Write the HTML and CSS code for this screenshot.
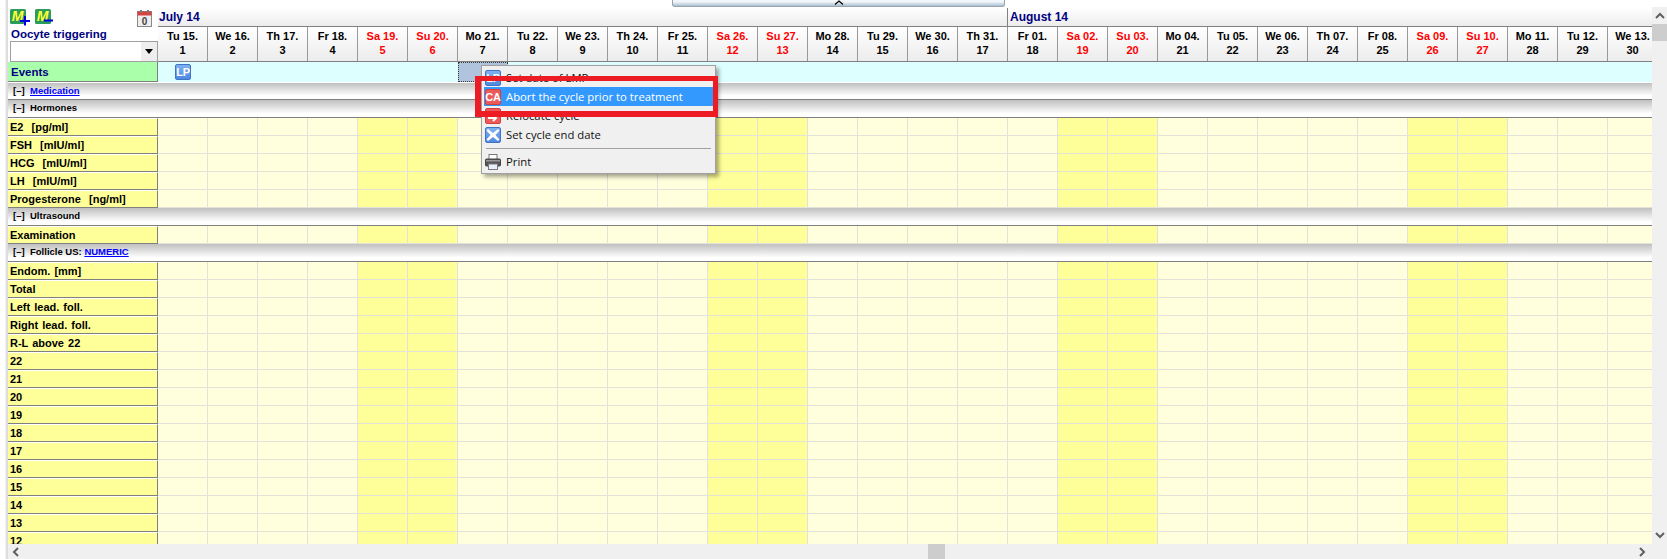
FILE: index.html
```html
<!DOCTYPE html>
<html lang="en">
<head>
<meta charset="utf-8">
<title>Cycle chart</title>
<link rel="stylesheet" href="styles.css">
</head>
<body>
<div class="frame">
  <div class="edge"></div>
  <div class="view">
    <div class="content">
      <div class="head">
        <div class="head-left">
          <div class="tools">
            <svg class="tool" width="21" height="17" viewBox="0 0 21 17"><rect x="0" y="0" width="16" height="15" rx="1.500" fill="#2a9d5c"/><text x="7.500" y="12" class="m">M</text><path d="M15 7v9.500M10 12h10" stroke="#0000e0" stroke-width="2"/></svg>
            <svg class="tool" width="21" height="17" viewBox="0 0 21 17"><rect x="0" y="0" width="16" height="15" rx="1.500" fill="#2a9d5c"/><text x="7.500" y="12" class="m">M</text><path d="M9 11.500h9" stroke="#0000e0" stroke-width="2"/></svg>
            <svg class="cal" width="15" height="17" viewBox="0 0 15 17"><rect x=".5" y="1.500" width="14" height="15" fill="#eee" stroke="#888"/><rect x=".5" y="1.500" width="14" height="4" fill="#d94040"/><rect x="3" y="0" width="2" height="3" fill="#777"/><rect x="10" y="0" width="2" height="3" fill="#777"/><text x="7.500" y="15" class="caltext">0</text></svg>
          </div>
          <div class="picker-label">Oocyte triggering</div>
          <div class="picker"><span class="picker-btn"><i class="tri"></i></span></div>
        </div>
        <div class="head-right">
          <div class="months">
            <div class="month july">July 14</div>
            <div class="month august">August 14</div>
          </div>
          <div class="days">
            <div class="day">Tu 15.<br>1</div>
            <div class="day">We 16.<br>2</div>
            <div class="day">Th 17.<br>3</div>
            <div class="day">Fr 18.<br>4</div>
            <div class="day off">Sa 19.<br>5</div>
            <div class="day off">Su 20.<br>6</div>
            <div class="day">Mo 21.<br>7</div>
            <div class="day">Tu 22.<br>8</div>
            <div class="day">We 23.<br>9</div>
            <div class="day">Th 24.<br>10</div>
            <div class="day">Fr 25.<br>11</div>
            <div class="day off">Sa 26.<br>12</div>
            <div class="day off">Su 27.<br>13</div>
            <div class="day">Mo 28.<br>14</div>
            <div class="day">Tu 29.<br>15</div>
            <div class="day">We 30.<br>16</div>
            <div class="day">Th 31.<br>17</div>
            <div class="day">Fr 01.<br>18</div>
            <div class="day off">Sa 02.<br>19</div>
            <div class="day off">Su 03.<br>20</div>
            <div class="day">Mo 04.<br>21</div>
            <div class="day">Tu 05.<br>22</div>
            <div class="day">We 06.<br>23</div>
            <div class="day">Th 07.<br>24</div>
            <div class="day">Fr 08.<br>25</div>
            <div class="day off">Sa 09.<br>26</div>
            <div class="day off">Su 10.<br>27</div>
            <div class="day">Mo 11.<br>28</div>
            <div class="day">Tu 12.<br>29</div>
            <div class="day">We 13.<br>30</div>
          </div>
        </div>
      </div>

      <div class="events">
        <div class="events-label">Events</div>
        <div class="events-cells"><span class="badge blue ev-lp">LP</span><span class="ev-sel"></span></div>
      </div>

      <div class="section first"><b class="toggle">[–]</b><a class="link">Medication</a></div>
      <div class="section"><b class="toggle">[–]</b><span>Hormones</span></div>
      <div class="row"><div class="label">E2&nbsp;&nbsp;[pg/ml]</div><div class="cells"></div></div>
      <div class="row"><div class="label">FSH&nbsp;&nbsp;[mIU/ml]</div><div class="cells"></div></div>
      <div class="row"><div class="label">HCG&nbsp;&nbsp;[mIU/ml]</div><div class="cells"></div></div>
      <div class="row"><div class="label">LH&nbsp;&nbsp;[mIU/ml]</div><div class="cells"></div></div>
      <div class="row"><div class="label">Progesterone&nbsp;&nbsp;[ng/ml]</div><div class="cells"></div></div>
      <div class="section"><b class="toggle">[–]</b><span>Ultrasound</span></div>
      <div class="row"><div class="label">Examination</div><div class="cells"></div></div>
      <div class="section"><b class="toggle">[–]</b><span>Follicle US:&nbsp;</span><a class="link">NUMERIC</a></div>
      <div class="row"><div class="label">Endom. [mm]</div><div class="cells"></div></div>
      <div class="row"><div class="label">Total</div><div class="cells"></div></div>
      <div class="row"><div class="label">Left lead. foll.</div><div class="cells"></div></div>
      <div class="row"><div class="label">Right lead. foll.</div><div class="cells"></div></div>
      <div class="row"><div class="label">R-L above 22</div><div class="cells"></div></div>
      <div class="row"><div class="label">22</div><div class="cells"></div></div>
      <div class="row"><div class="label">21</div><div class="cells"></div></div>
      <div class="row"><div class="label">20</div><div class="cells"></div></div>
      <div class="row"><div class="label">19</div><div class="cells"></div></div>
      <div class="row"><div class="label">18</div><div class="cells"></div></div>
      <div class="row"><div class="label">17</div><div class="cells"></div></div>
      <div class="row"><div class="label">16</div><div class="cells"></div></div>
      <div class="row"><div class="label">15</div><div class="cells"></div></div>
      <div class="row"><div class="label">14</div><div class="cells"></div></div>
      <div class="row"><div class="label">13</div><div class="cells"></div></div>
      <div class="row"><div class="label">12</div><div class="cells"></div></div>
    </div>
    <div class="hscroll">
      <svg class="arrow" width="8" height="10" viewBox="0 0 8 10"><path d="M6 1 2 5l4 4" fill="none" stroke="#606060" stroke-width="2"/></svg>
      <span class="hthumb"></span>
      <svg class="arrow right" width="8" height="10" viewBox="0 0 8 10"><path d="M2 1l4 4-4 4" fill="none" stroke="#606060" stroke-width="2"/></svg>
    </div>
  </div>
  <div class="vscroll">
    <svg class="varrow" width="10" height="8" viewBox="0 0 10 8"><path d="M1 6 5 2l4 4" fill="none" stroke="#606060" stroke-width="2"/></svg>
    <span class="vthumb"></span>
    <svg class="varrow down" width="10" height="8" viewBox="0 0 10 8"><path d="M1 2l4 4 4-4" fill="none" stroke="#606060" stroke-width="2"/></svg>
  </div>
</div>

<div class="grip"><svg width="10" height="5" viewBox="0 0 10 5"><path d="M1 4.500 5 1l4 3.500" fill="none" stroke="#000" stroke-width="1.300"/></svg></div>

<div class="menu">
  <div class="item"><span class="badge blue">LP</span><span>Set date of LMP</span></div>
  <div class="item active"><span class="badge red">CA</span><span>Abort the cycle prior to treatment</span></div>
  <div class="item"><span class="badge red"><svg width="14" height="14" viewBox="0 0 14 14"><path d="M2 9h7M7 6l3 3-3 3" fill="none" stroke="#fff" stroke-width="2"/></svg></span><span>Relocate cycle</span></div>
  <div class="item"><span class="badge blue"><svg width="14" height="14" viewBox="0 0 14 14"><path d="M2 1 7 5 12 1l1.500 1.500L9.500 7l4 4.500L12 13 7 9l-5 4-1.500-1.500 4-4.500-4-4.500z" fill="#fff"/></svg></span><span>Set cycle end date</span></div>
  <div class="sep"></div>
  <div class="item"><svg class="printer" width="16" height="16" viewBox="0 0 16 16"><rect x="4" y="0.500" width="8" height="5" fill="#fff" stroke="#777"/><rect x=".5" y="5" width="15" height="7" rx="1" fill="#555" stroke="#444"/><rect x="1" y="6" width="14" height="1.500" fill="#999"/><rect x="3.500" y="10" width="9" height="5.500" fill="#e8f0f5" stroke="#778"/></svg><span>Print</span></div>
</div>
<div class="callout"></div>
</body>
</html>
```

FILE: styles.css
```css
* { box-sizing: border-box; }
html, body { margin: 0; padding: 0; }
body {
  width: 1667px;
  height: 559px;
  overflow: hidden;
  background: #fff;
  font: bold 11px "Liberation Sans", Arial, sans-serif;
  color: #000;
}
.frame { display: flex; height: 559px; }
.edge {
  flex: none;
  width: 8px;
  background: linear-gradient(to right, #fff 0, #fff 5px, #e4e4e4 6px, #d8d8d8 8px);
}
.view { flex: none; width: 1644px; display: flex; flex-direction: column; }
.content { flex: none; height: 544px; overflow: hidden; }

.head { display: flex; height: 62px; }
.head-left { flex: none; width: 150px; display: flex; flex-direction: column; background: #fff; }
.tools { display: flex; height: 27px; padding: 9px 0 0 2px; gap: 4px; }
.tool { flex: none; }
.m { font: italic bold 14px "Liberation Sans", sans-serif; fill: #ffff33; text-anchor: middle; }
.caltext { font: bold 10px "Liberation Sans", sans-serif; fill: #444; text-anchor: middle; }
.cal { margin: 1px 6px 0 auto; }
.picker-label { height: 14px; line-height: 14px; padding-left: 3px; color: #000080; font-size: 11.5px; }
.picker {
  height: 21px;
  margin-left: 2px;
  border: 1px solid #a0a0a0;
  background: #fff;
  display: flex;
  justify-content: flex-end;
}
.picker-btn { width: 16px; background: #eee; display: flex; align-items: center; justify-content: center; }
.tri { width: 0; height: 0; border: 4.500px solid transparent; border-top: 5px solid #000; border-bottom: 0; }

.head-right { flex: 1; min-width: 0; overflow: hidden; }
.months {
  display: flex;
  height: 27px;
  border-bottom: 1px solid #808080;
  background: linear-gradient(to bottom, #fff 0, #fff 8px, #ececec 26px);
}
.month { flex: none; font-size: 12px; color: #000080; line-height: 18px; }
.july { width: 849px; padding: 8px 0 0 1px; }
.august { width: 651px; margin-top: 8px; border-left: 1px solid #808080; padding-left: 2px; }
.days { display: flex; height: 35px; border-bottom: 1px solid #808080; }
.day {
  flex: none;
  width: 50px;
  text-align: center;
  line-height: 14px;
  padding-top: 2px;
  border-right: 1px solid #999;
  background: linear-gradient(to bottom, #fff, #ececec);
}
.off { color: #f00; }

.events { display: flex; height: 21px; }
.events-label {
  flex: none;
  width: 150px;
  height: 20px;
  padding-left: 3px;
  line-height: 20px;
  font-size: 11.5px;
  color: #000080;
  background: #aaffaa;
  border-right: 1px solid #808080;
  border-bottom: 1px solid #808080;
}
.events-cells { flex: none; width: 1500px; height: 20px; background: #ddffff; display: flex; }
.badge {
  flex: none;
  width: 16px;
  height: 16px;
  border-radius: 2px;
  display: flex;
  align-items: center;
  justify-content: center;
  color: #fff;
  font: bold 11px "Liberation Sans", sans-serif;
  letter-spacing: -.3px;
}
.blue { background: linear-gradient(to bottom, #7fb0f2, #4f8ae0); border: 1px solid #3f74c4; }
.red { background: #ec5a5a; border: 1px solid #d04040; }
.ev-lp { margin: 2px 0 0 17px; }
.ev-sel { flex: none; width: 50px; height: 20px; margin-left: 267px; background: #b0c4de; border: 1px dotted #333; }

.section {
  height: 18px;
  padding: 0 0 2px 5px;
  display: flex;
  align-items: center;
  font-size: 9.500px;
  background: linear-gradient(to bottom, #c0c0c0, #fff 80%);
  border-bottom: 1px solid #808080;
}
.section.first { height: 17px; }
.toggle { width: 17px; color: #000; }
.link { color: #0000ff; text-decoration: underline; }

.row { display: flex; height: 18px; }
.label {
  flex: none;
  width: 150px;
  padding-left: 2px;
  line-height: 16px;
  word-spacing: 1px;
  background: #ffff99;
  border-top: 1px solid #fff;
  border-right: 1px solid #808080;
  border-bottom: 1px solid #808080;
}
.cells {
  flex: none;
  width: 1500px;
  background:
    linear-gradient(to left, #e2e2d8 1px, transparent 1px) 0 0 / 50px 100%,
    linear-gradient(to top, #e2e2d8 1px, transparent 1px),
    linear-gradient(to right, #ffffdd 200px, #ffff99 200px, #ffff99 300px, #ffffdd 300px) 0 0 / 350px 100%;
}

.hscroll { flex: none; height: 15px; background: #f0f0f0; display: flex; align-items: center; }
.arrow { flex: none; margin-left: 4px; }
.arrow.right { margin-left: auto; margin-right: 6px; }
.hthumb { flex: none; width: 17px; height: 15px; margin-left: 908px; background: #cdcdcd; }
.vscroll {
  flex: none;
  width: 15px;
  margin-top: 7px;
  background: #f0f0f0;
  display: flex;
  flex-direction: column;
  align-items: center;
}
.varrow { flex: none; margin-top: 5px; }
.vthumb { flex: none; width: 15px; height: 17px; margin-top: 4px; background: #cdcdcd; }
.varrow.down { margin-top: auto; margin-bottom: 20px; }

.grip {
  position: absolute;
  left: 672px;
  top: 0;
  width: 333px;
  height: 7px;
  border: 1px solid #9aa2aa;
  border-top: 0;
  border-radius: 0 0 3px 3px;
  background: linear-gradient(to bottom, #f2f6fa 30%, #a8c0d0);
  display: flex;
  justify-content: center;
}

.menu {
  position: absolute;
  left: 481px;
  top: 65px;
  width: 235px;
  height: 109px;
  padding: 2px;
  background: #f0f0f0;
  border: 1px solid #a0a0a0;
  box-shadow: 3px 3px 4px rgba(0, 0, 0, .35);
  font: 11.300px "Open Sans", sans-serif;
  color: #111;
}
.item { display: flex; align-items: center; height: 19px; padding-left: 1px; gap: 5px; }
.item.active { background: #3399ff; color: #fff; }
.printer { flex: none; }
.sep { height: 1px; margin: 4px 2px 3px 2px; background: #a0a0a0; }

.callout {
  position: absolute;
  left: 475px;
  top: 76px;
  width: 243px;
  height: 41px;
  border: 5px solid #ed1c24;
  border-left-width: 6px;
  border-bottom-width: 6px;
  pointer-events: none;
}
```
